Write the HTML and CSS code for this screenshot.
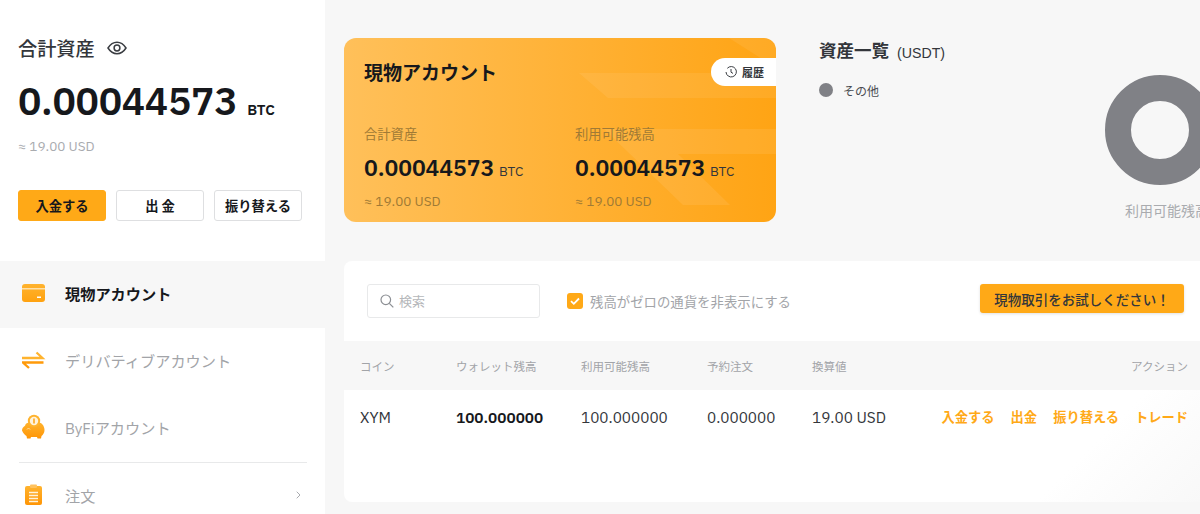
FILE: index.html
```html
<!DOCTYPE html>
<html lang="ja">
<head>
<meta charset="utf-8">
<title>資産</title>
<link rel="stylesheet" href="styles.css">
</head>
<body>
<div class="page">
  <aside class="sidebar">
    <section class="summary">
      <div class="summary-title">
        <span>合計資産</span>
        <svg class="eye" viewBox="0 0 20 14" width="20" height="14"><path d="M1 7c2.400-3.800 5.400-5.700 9-5.700S16.600 3.200 19 7c-2.400 3.800-5.400 5.700-9 5.700S3.400 10.800 1 7z" fill="none" stroke="#3a3d42" stroke-width="1.500"/><circle cx="10" cy="7" r="2.900" fill="none" stroke="#3a3d42" stroke-width="1.500"/></svg>
      </div>
      <div class="summary-amount"><span class="big">0.00044573</span><span class="unit">BTC</span></div>
      <div class="summary-usd">≈ 19.00 USD</div>
      <div class="summary-actions">
        <button class="btn btn-primary">入金する</button>
        <button class="btn">出 金</button>
        <button class="btn">振り替える</button>
      </div>
    </section>
    <nav class="nav">
      <a class="nav-item active">
        <svg viewBox="0 0 24 20" width="24" height="20"><defs><linearGradient id="g1" x1="0" y1="0" x2="0" y2="1"><stop offset="0" stop-color="#ffb32e"/><stop offset="1" stop-color="#ffa210"/></linearGradient></defs><rect y="1" width="23" height="18" rx="3" fill="url(#g1)"/><rect y="5" width="23" height="1.500" fill="#ffe0a8"/><rect x="15" y="13.500" width="4" height="1.500" fill="#fff"/></svg>
        <span>現物アカウント</span>
      </a>
      <a class="nav-item">
        <svg viewBox="0 0 24 20" width="24" height="20"><path d="M0 8h20.500L14.500 2.500" fill="none" stroke="#ffb32e" stroke-width="2.300"/><path d="M21.500 12.500H1L7 18" fill="none" stroke="#ff9a0a" stroke-width="2.300"/></svg>
        <span>デリバティブアカウント</span>
      </a>
      <a class="nav-item">
        <svg viewBox="0 0 24 26" width="24" height="26"><defs><linearGradient id="g2" x1="0" y1="0" x2="0" y2="1"><stop offset="0" stop-color="#ffb32e"/><stop offset="1" stop-color="#ff9505"/></linearGradient></defs><path d="M0 16.500c0-2 1.200-3.800 3-4.800.5-2 2.500-3.200 4.500-3.200h9c3.200 0 6 3.500 6 7.500 0 2.800-1.400 4.800-3 6l-.5 2.500h-3.500l-.5-1.500h-6l-.5 1.500H5l-.5-2.500C3 21 1.500 19.500 1 18.500z" fill="url(#g2)"/><circle cx="12" cy="7" r="6.200" fill="#ffb32e"/><circle cx="12" cy="7" r="4.200" fill="#fff3dc"/><path d="M12 4.500v5" stroke="#ffa210" stroke-width="1.500"/><path d="M5 15.500l1.500-1.500 1.500 1.500" fill="none" stroke="#ffe0a8" stroke-width="1"/></svg>
        <span>ByFiアカウント</span>
      </a>
      <div class="nav-divider"></div>
      <a class="nav-item">
        <svg viewBox="0 0 24 24" width="24" height="24"><defs><linearGradient id="g3" x1="0" y1="0" x2="0" y2="1"><stop offset="0" stop-color="#ffb32e"/><stop offset="1" stop-color="#ff9505"/></linearGradient></defs><rect x="3" y="3" width="17" height="19" rx="2" fill="url(#g3)"/><rect x="8" y="1.500" width="7" height="3.500" rx="1" fill="#ffc25e"/><path d="M7 9.500h9M7 12.500h9M7 15.500h9M7 18.500h9" stroke="#fff3dc" stroke-width="1.300"/></svg>
        <span>注文</span>
        <svg class="chev" viewBox="0 0 5 8" width="5" height="8"><path d="M.7.7L4 4 .7 7.300" fill="none" stroke="#a9abaf" stroke-width="1"/></svg>
      </a>
    </nav>
  </aside>

  <main class="main">
    <div class="top">
      <section class="card">
        <svg class="card-deco" viewBox="0 0 432 184" width="432" height="184">
          <path d="M235 35h197v25H264z" fill="#fff" opacity=".07"/>
          <path d="M385 0h47v30z" fill="#fff" opacity=".07"/>
          <path d="M260 91h172v25H334l52 51h-47z" fill="#fff" opacity=".08"/>
        </svg>
        <div class="card-head">
          <h2 class="card-title">現物アカウント</h2>
          <div class="history">
            <svg viewBox="0 0 12 12" width="12" height="12"><path d="M2.300 2.300A5.200 5.200 0 1 1 1 6" fill="none" stroke="#3a3d42" stroke-width="1"/><path d="M6 3v3.200l2 1.200" fill="none" stroke="#3a3d42" stroke-width="1"/></svg>
            <span>履歴</span>
          </div>
        </div>
        <div class="card-cols">
          <div class="card-col">
            <div class="card-label">合計資産</div>
            <div class="card-amount"><span class="mid">0.00044573</span><span class="mid-unit">BTC</span></div>
            <div class="card-usd">≈ 19.00 USD</div>
          </div>
          <div class="card-col">
            <div class="card-label">利用可能残高</div>
            <div class="card-amount"><span class="mid">0.00044573</span><span class="mid-unit">BTC</span></div>
            <div class="card-usd">≈ 19.00 USD</div>
          </div>
        </div>
      </section>

      <section class="overview">
        <div class="overview-left">
          <h2 class="overview-title">資産一覧<span class="overview-unit">(USDT)</span></h2>
          <div class="legend"><span class="dot"></span><span>その他</span></div>
        </div>
        <div class="overview-chart">
          <div class="donut"></div>
          <div class="donut-label">利用可能残高</div>
        </div>
      </section>
    </div>

    <section class="panel">
      <div class="toolbar">
        <div class="search">
          <svg viewBox="0 0 14 14" width="14" height="14"><circle cx="5.800" cy="5.800" r="4.800" fill="none" stroke="#8b8e93" stroke-width="1.200"/><path d="M9.300 9.300l4 4" stroke="#8b8e93" stroke-width="1.200"/></svg>
          <span>検索</span>
        </div>
        <label class="check">
          <span class="box"><svg viewBox="0 0 16 16" width="16" height="16"><path d="M4 8.200l2.800 2.600L12 5.500" fill="none" stroke="#fff" stroke-width="1.800"/></svg></span>
          <span>残高がゼロの通貨を非表示にする</span>
        </label>
        <button class="try">現物取引をお試しください！</button>
      </div>
      <div class="table-head">
        <span>コイン</span><span>ウォレット残高</span><span>利用可能残高</span><span>予約注文</span><span>換算値</span><span class="right">アクション</span>
      </div>
      <div class="table-row">
        <span>XYM</span><span class="strong">100.000000</span><span>100.000000</span><span>0.000000</span><span>19.00 USD</span>
        <span class="actions"><a>入金する</a><a>出金</a><a>振り替える</a><a>トレード</a></span>
      </div>
    </section>
  </main>
</div>
</body>
</html>
```
FILE: styles.css
```css
* { box-sizing: border-box; }
html, body { margin: 0; height: 514px; overflow: hidden; }
body {
  font-family: "IBM Plex Sans", "Noto Sans CJK JP", sans-serif;
  background: #f7f7f7;
  color: #16181c;
}
h2 { margin: 0; }
.page { display: flex; width: 1200px; height: 514px; overflow: hidden; }

.sidebar { flex: 0 0 325px; background: #fff; height: 514px; }
.summary { height: 261px; padding: 37px 0 0 18px; }
.summary-title { display: flex; align-items: center; gap: 12px; height: 22px; font-size: 19.200px; font-weight: 500; color: #33363b; }
.summary-amount { margin-top: 18px; height: 48px; display: flex; align-items: baseline; }
.big { font-size: 39px; font-weight: 600; letter-spacing: -0.3px; line-height: 47px; }
.unit { margin-left: 10px; font-size: 15px; font-weight: 600; }
.summary-usd { margin-top: 12px; font-size: 13.500px; line-height: 18px; color: #a9abaf; }
.summary-actions { display: flex; gap: 10px; margin-top: 35px; }
.btn {
  width: 88px; height: 31px; padding: 0;
  background: #fff; border: 1px solid #dedfe1; border-radius: 3px;
  font: 600 13.300px "Noto Sans CJK JP", sans-serif; color: #16181c;
}
.btn-primary { background: #ffa917; border-color: #ffa917; }

.nav-item { display: flex; align-items: center; height: 67px; padding: 0 24px 3px 22px; font-size: 15.200px; color: #a2a4a8; }
.nav-item > svg:first-child { flex: none; width: 24px; margin-right: 19px; }
.nav-item.active { background: #f7f7f7; color: #16181c; font-weight: 600; }
.nav-divider { height: 1px; margin: 0 18px 0 19px; background: #e8e9ea; }
.chev { margin-left: auto; }

.main { flex: 0 0 875px; width: 875px; padding: 38px 0 0 19px; overflow: hidden; }
.top { display: flex; height: 223px; }

.card {
  position: relative; overflow: hidden;
  flex: 0 0 432px; height: 184px; padding: 20px 0 0 20px;
  border-radius: 12px;
  background: linear-gradient(90deg, #ffc05a 0%, #ffa414 100%);
}
.card-deco { position: absolute; left: 0; top: 0; }
.card-head { position: relative; display: flex; justify-content: space-between; align-items: center; height: 28px; }
.card-title { font-size: 19px; font-weight: 600; line-height: 28px; padding-top: 2px; color: #16181c; }
.history {
  display: flex; align-items: center; gap: 5px;
  width: 65px; height: 28px; padding-left: 14px;
  background: #fff; border-radius: 14px 0 0 14px;
  font-size: 11px; font-weight: 600; color: #33363b;
}
.card-cols { position: relative; display: flex; margin-top: 38px; }
.card-col { flex: 0 0 211px; }
.card-label { font-size: 13.300px; line-height: 20px; color: #a07a35; }
.card-amount { margin-top: 8px; height: 30px; display: flex; align-items: baseline; }
.mid { font-size: 23px; font-weight: 600; line-height: 30px; letter-spacing: -0.1px; color: #16181c; }
.mid-unit { margin-left: 5px; font-size: 13.500px; color: #33363b; }
.card-usd { margin-top: 10px; font-size: 13.500px; line-height: 18px; color: #a07a35; }

.overview { display: flex; margin-left: 43px; flex: 1; min-width: 0; }
.overview-left { flex: 0 0 286px; }
.overview-title { font-size: 17.500px; font-weight: 600; line-height: 26px; color: #33363b; }
.overview-unit { margin-left: 8px; font: 400 14.200px "Liberation Sans", sans-serif; vertical-align: -1px; }
.legend { display: flex; align-items: center; gap: 10px; margin-top: 18px; font-size: 12px; color: #4a4d52; height: 16px; }
.dot { width: 14px; height: 14px; border-radius: 50%; background: #808186; }
.overview-chart { flex: 0 0 110px; padding-top: 37px; }
.donut { width: 110px; height: 110px; border-radius: 50%; border: 26px solid #808186; }
.donut-label { margin: 17px 0 0 20px; width: 90px; white-space: nowrap; font-size: 14px; line-height: 18px; color: #a9abaf; }

.panel {
  width: 856px; height: 241px; border-radius: 8px 0 0 8px;
  background: linear-gradient(135deg, #fff 85%, #f8f8f8 100%);
}
.toolbar { display: flex; align-items: center; height: 80px; padding: 0 16px 0 23px; }
.search {
  display: flex; align-items: center; gap: 5px;
  width: 173px; height: 34px; padding: 0 0 1px 12px;
  border: 1px solid #e8e9ea; border-radius: 3px;
  font-size: 13px; color: #b5b7ba;
}
.check { display: flex; align-items: center; gap: 7px; margin-left: 27px; font-size: 13.400px; color: #a2a4a8; }
.box { display: flex; width: 16px; height: 16px; background: #ffa917; border-radius: 3px; }
.try {
  margin: 0 0 5px auto; width: 204px; height: 29px; padding: 0;
  background: #ffa917; border: 0; border-radius: 3px;
  box-shadow: 0 1px 3px rgba(0,0,0,.12);
  font: 500 13.500px "Noto Sans CJK JP", sans-serif; color: #33363b;
}
.table-head, .table-row {
  display: grid;
  grid-template-columns: 96px 125px 126px 105px 1fr auto;
  padding: 0 12px 0 16px;
  align-items: center;
}
.table-head { height: 49px; background: #f7f7f7; font-size: 11.500px; color: #a2a4a8; }
.table-row { height: 53px; font-size: 15.300px; color: #33363b; }
.strong { font-weight: 600; color: #16181c; }
.actions { display: flex; gap: 16px; font-size: 13.250px; font-weight: 600; color: #ffa917; }
```
